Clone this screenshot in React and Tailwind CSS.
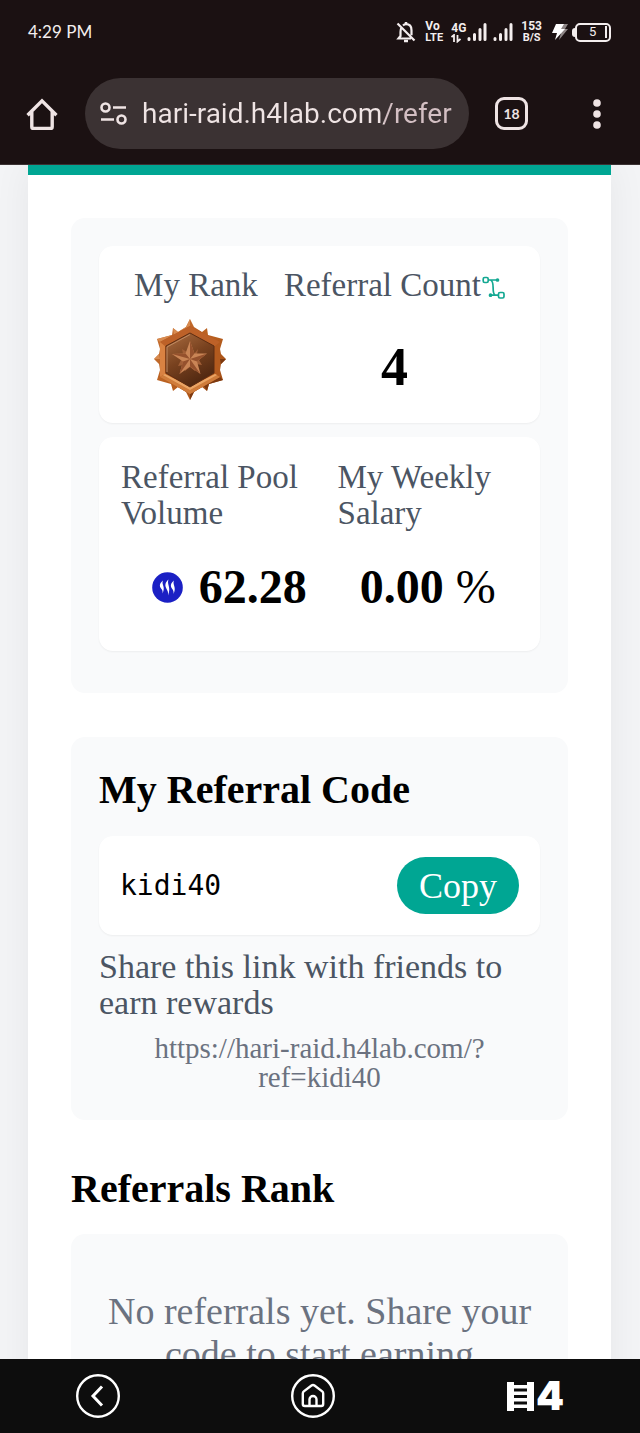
import React from "react";

function SignalBars() {
  return (
    <svg className="h-5 w-5" viewBox="0 0 20 20" stroke="#f4eeee" strokeWidth="3" strokeLinecap="round" aria-hidden="true">
      <path d="M2 17.500v-1M7.500 17.500v-5M13 17.500v-10M18 17.500v-15" />
    </svg>
  );
}

function StatusBar() {
  return (
    <div className="flex h-16 items-center justify-between pr-[29px] pl-7 text-[#f4eeee]">
      <span className="font-['Lato',sans-serif] text-[17px]">4:29 PM</span>
      <div className="flex items-center font-['Roboto',sans-serif] text-xs leading-3 font-bold">
        <svg className="mr-[9px] h-[22px] w-5" viewBox="0 0 20 22" fill="none" stroke="#f4eeee" strokeWidth="2.200" aria-hidden="true">
          <path d="M5.500 6.500C4.500 8 4.500 9.500 4.500 11v4L2.500 17.500H15M7 4.500C8 3.500 9 3.200 10 3.200c3.500 0 5.500 2.500 5.500 6v5M1.500 2.500l17 17" />
          <path d="M10 1v2M8 20h4" strokeWidth="2.500" />
        </svg>
        <span className="mr-2 flex w-[18px] flex-col">
          <span>Vo</span>
          <span className="text-[11px] leading-3">LTE</span>
        </span>
        <span className="flex w-4 flex-col">
          <span>4G</span>
          <svg className="h-[9px] w-[10px]" viewBox="0 0 10 9" fill="none" stroke="#f4eeee" strokeWidth="1.800" aria-hidden="true">
            <path d="M.5 3L3 1v7M6.500 1v6.500l3-2.500" />
          </svg>
        </span>
        <span className="mr-[6px]"><SignalBars /></span>
        <span className="mr-[8px]"><SignalBars /></span>
        <span className="mr-[10px] flex flex-col items-center">
          <span>153</span>
          <span className="text-[11px] leading-3">B/S</span>
        </span>
        <svg className="mr-1 h-[18px] w-4" viewBox="0 0 16 18" aria-hidden="true">
          <path d="M8 1h8l-3 5h3L7 17l2-7H6z" fill="#8d8585" />
          <path d="M4 1h8L9 6h4L3 17l2-7H0z" fill="#fff" />
        </svg>
        <span className="h-[9px] w-[3px] rounded-l-sm bg-[#f4eeee]" />
        <span className="flex h-[19px] w-9 items-center justify-between rounded-[5px] border-2 border-[#f4eeee] pr-[2px] pl-3 text-[13px] font-normal">
          5<span className="h-3 w-[2px] bg-[#f4eeee]" />
        </span>
      </div>
    </div>
  );
}

function BrowserBar() {
  return (
    <div className="flex items-center pt-[14px] pr-[39px] pb-[15px] pl-[26px]">
      <button type="button" aria-label="Home" className="mr-[27px]">
        <svg className="h-8 w-8" viewBox="0 0 32 32" fill="none" stroke="#efe4e4" strokeWidth="3.400" strokeLinecap="square">
          <path d="M2.800 16L16 2.800 29.200 16M5.800 14.500V29a1.500 1.500 0 0 0 1.500 1.500h17.400a1.500 1.500 0 0 0 1.500-1.500V14.500" />
        </svg>
      </button>
      <div className="flex h-[71px] min-w-0 flex-1 items-center rounded-full bg-[#3b3233] pr-[13px] pl-[15px]">
        <svg className="mr-[14px] h-6 w-7 shrink-0" viewBox="0 0 28 24" fill="none" stroke="#efe4e4" strokeWidth="2.600" aria-hidden="true">
          <circle cx="5.500" cy="5.500" r="4" />
          <circle cx="21.500" cy="17.500" r="4" />
          <path d="M13 5.500h13M1 17.500h13" />
        </svg>
        <input
          aria-label="Address"
          readOnly
          value="hari-raid.h4lab.com/refer"
          className="w-full min-w-0 bg-linear-to-r from-[#efe4e4] from-77% to-[#d3bfc3] to-77% bg-clip-text font-['Roboto',sans-serif] text-[28px] text-transparent outline-none"
        />
      </div>
      <button type="button" aria-label="Tabs" className="mr-[65px] ml-[26px] flex h-[33px] w-[33px] items-center justify-center rounded-[9px] border-[3px] border-[#efe4e4] font-['Lato',sans-serif] text-sm font-bold text-[#efe4e4]">
        18
      </button>
      <button type="button" aria-label="Menu">
        <svg className="h-[30px] w-2" viewBox="0 0 8 30" fill="#efe4e4">
          <circle cx="4" cy="4" r="3.800" />
          <circle cx="4" cy="15" r="3.800" />
          <circle cx="4" cy="26" r="3.800" />
        </svg>
      </button>
    </div>
  );
}

function Medal() {
  return (
    <svg className="h-[81px] w-[72px]" viewBox="0 0 72 81" role="img" aria-label="Bronze rank">
      <defs>
        <linearGradient id="rim" x1="0" y1="0" x2="1" y2="1">
          <stop offset="0" stopColor="#c9753a" />
          <stop offset=".5" stopColor="#b9601f" />
          <stop offset="1" stopColor="#9c4914" />
        </linearGradient>
        <linearGradient id="face" x1=".2" y1="0" x2=".7" y2="1">
          <stop offset="0" stopColor="#a5683d" />
          <stop offset=".45" stopColor="#79421f" />
          <stop offset="1" stopColor="#4a240f" />
        </linearGradient>
      </defs>
      <path
        d="M36 0l4 8 8 5 5-4 1 7 15 4-3 10 1 5 5 5-5 5-1 6 3 10-14 4-2 7-5-4-8 5-4 8-4-8-8-5-5 4-2-7-14-4 3-10-1-6-5-5 5-5 1-5-3-10 15-4 1-7 5 4 8-5z"
        fill="url(#rim)"
      />
      <path d="M36 0v8L20 17l-1-8 5 4 8-5zM18 16L3 20l5 5zM5 35l-5 5h6z" fill="#d88b50" />
      <path d="M36 81v-7l4-1zM50 67l3 5 2-7 14-4-4-4zM72 40l-5 5-1-5z" fill="#7c3910" />
      <path d="M36 7l30 16v35L36 75 6 58V23z" fill="#b35a1e" />
      <path d="M36 7l30 16-5 4-25-13-25 13-5-4z" fill="#bd6128" />
      <path d="M6 23l5 4v28l-5 3z" fill="#d98242" />
      <path d="M6 58l5-3 25 13 25-13 5 3-30 17z" fill="#cf7c3b" />
      <path d="M11 55l25 13 25-13 2 1-27 15L9 56z" fill="#eaa565" />
      <path d="M36 14l24 13v27L36 68 12 54V27z" fill="url(#face)" stroke="#5e2d12" strokeWidth="1" />
      <path d="M13 53V28l23-12.500" fill="none" stroke="#c08a62" strokeWidth="1" />
      <path d="M36 30l4 5 4-5-1 5 5 1-3 5 3 5-6-1-1 7-5-4-5 4-1-6-6 1 3-6-4-5 6-1-1-5 5 3z" fill="#a15f37" />
      <path d="M36 22l4.500 12.500H53L43 42.500 46.500 55 36 47.500 25.500 55 29 42.500 18 35l13.500-.5z" fill="#c98556" />
      <path d="M36 22v18l4.500-5.500zM53 34.500L36 40l7 2.500zM46.500 55L36 40v7.500zM25.500 55L36 40l-7 2.500zM18 35l18 5-4.500-5.500z" fill="#95512d" />
    </svg>
  );
}

function ReferralIcon() {
  return (
    <svg className="mt-[6px] h-6 w-6" viewBox="0 0 24 24" fill="none" stroke="#13a892" strokeWidth="1.700" aria-hidden="true">
      <rect x="2.200" y="1.500" width="5" height="5" rx="1.500" />
      <rect x="17.500" y="16.500" width="5.500" height="5.500" rx="1.500" />
      <path d="M7.200 4h9.500M9.500 4c5 1.500.5 13 4.500 15M9 19.200h8.500" />
      <circle cx="16.500" cy="4" r="1" fill="#13a892" />
      <circle cx="9.500" cy="19.200" r="1" fill="#13a892" />
    </svg>
  );
}

function SteemIcon() {
  return (
    <svg className="h-[31px] w-[31px]" viewBox="0 0 31 31" aria-hidden="true">
      <circle cx="15.500" cy="15.500" r="15.300" fill="#1b20c4" />
      <g fill="#fff">
        <path d="M11 8.500c-2 4 3 6-.5 13 1-5-3.500-5-2.500-9 .3-1.500 1.500-2.500 3-4z" />
        <path d="M16.500 7.500c-2 5 3 7.500-.5 16 1-6-3.500-7-2.500-11.500.3-1.800 1.500-3 3-4.500z" />
        <path d="M22 8.500c-2 4 3 6.500-.5 13.500 1-5-3.500-5.500-2.500-9.500.3-1.500 1.500-2.500 3-4z" />
      </g>
    </svg>
  );
}

function StatLabel({ children }) {
  return <div className="text-[33px] leading-9 text-[#4b5563]">{children}</div>;
}

function Stats() {
  return (
    <section className="rounded-[14px] bg-[#f9fafb] p-7 pb-[42px]">
      <div className="flex justify-around rounded-[14px] bg-white px-[22px] pt-[21px] pb-[23px] shadow-xs">
        <div className="flex flex-col gap-4">
          <StatLabel>My Rank</StatLabel>
          <div className="pl-5">
            <Medal />
          </div>
        </div>
        <div className="flex flex-col items-center gap-8">
          <div className="flex items-center">
            <StatLabel>Referral Count</StatLabel>
            <ReferralIcon />
          </div>
          <div className="text-[54px] leading-[64px] font-bold">4</div>
        </div>
      </div>
      <div className="mt-[14px] grid grid-cols-[6fr_5fr] gap-y-8 rounded-[14px] bg-white px-[22px] pt-[22px] pb-10 shadow-xs">
        <StatLabel>Referral Pool<br />Volume</StatLabel>
        <StatLabel>My Weekly<br />Salary</StatLabel>
        <div className="flex items-center justify-center gap-4 text-5xl font-bold">
          <SteemIcon />
          <span>62.28</span>
        </div>
        <div className="text-center text-5xl font-bold">
          0.00 <span className="font-normal">%</span>
        </div>
      </div>
    </section>
  );
}

function ReferralCode() {
  return (
    <section className="mt-11 rounded-[14px] bg-[#f9fafb] p-7">
      <h2 className="text-[40px] leading-[50px] font-bold">My Referral Code</h2>
      <div className="mt-[21px] flex items-center justify-between rounded-[14px] bg-white p-[21px] shadow-xs">
        <span className="font-['DejaVu_Sans_Mono',monospace] text-[28px]">kidi40</span>
        <button type="button" className="h-[57px] rounded-full bg-[#00a693] px-[22px] text-4xl text-white">Copy</button>
      </div>
      <p className="mt-[14px] text-[34px] leading-9 text-[#4b5563]">Share this link with friends to earn rewards</p>
      <p className="mt-[13px] text-center text-[29px] leading-[29px] text-[#6b7280]">
        https://hari-raid.h4lab.com/?<wbr />ref=kidi40
      </p>
    </section>
  );
}

function NavBar() {
  return (
    <nav className="flex h-[74px] shrink-0 items-center justify-between bg-[#0d0d0d] px-[76px]">
      <button type="button" aria-label="Back">
        <svg className="h-11 w-11" viewBox="0 0 44 44" fill="none" stroke="#fff" strokeWidth="2.400">
          <circle cx="22" cy="22" r="20.800" />
          <path d="M26 12.500L17 22l9 9.500" strokeWidth="3" />
        </svg>
      </button>
      <button type="button" aria-label="Home screen">
        <svg className="h-11 w-11" viewBox="0 0 44 44" fill="none" stroke="#fff" strokeWidth="2.400">
          <circle cx="22" cy="22" r="20.800" />
          <path d="M11.800 19.500c0-1 .4-1.600 1-2.100L20.500 11.500a2.500 2.500 0 0 1 3 0l7.700 5.900c.6.500 1 1.100 1 2.100V30a2 2 0 0 1-2 2H13.800a2 2 0 0 1-2-2z" />
          <path d="M18.500 32v-6.500a3.500 3.500 0 0 1 7 0V32" />
        </svg>
      </button>
      <button type="button" aria-label="H4" className="flex items-center gap-[2px] text-white">
        <svg className="h-[30px] w-[27px]" viewBox="0 0 27 30" fill="#fff" aria-hidden="true">
          <path d="M0 1h7v29H0zM20 1h7v29h-7zM6 4h15v3.500H6zM6 10.500h15V14H6zM6 17h15v3.500H6zM6 23.500h15V27H6z" />
        </svg>
        <span className="font-['Inter',sans-serif] text-[40px] leading-8 font-black">4</span>
      </button>
    </nav>
  );
}

export default function App() {
  return (
    <div className="flex h-screen flex-col overflow-hidden bg-[#f3f4f6] font-['Liberation_Serif',serif] text-black">
      <header className="shrink-0 border-b border-[#3b3233] bg-[#1b1112]">
        <StatusBar />
        <BrowserBar />
      </header>
      <div className="min-h-0 flex-1 overflow-hidden pr-[29px] pl-7">
        <main className="border-t-[10px] border-[#00a693] bg-white px-[43px] pt-[43px] shadow-[0_0_36px_rgba(0,0,0,0.06)]">
          <Stats />
          <ReferralCode />
          <h2 className="mt-11 text-[40px] leading-[50px] font-bold">Referrals Rank</h2>
          <section className="mt-5 rounded-[14px] bg-[#f9fafb] px-7 py-14">
            <p className="text-center text-[38px] leading-[43px] text-[#6b7280]">
              No referrals yet. Share your code to start earning
            </p>
          </section>
        </main>
      </div>
      <NavBar />
    </div>
  );
}
